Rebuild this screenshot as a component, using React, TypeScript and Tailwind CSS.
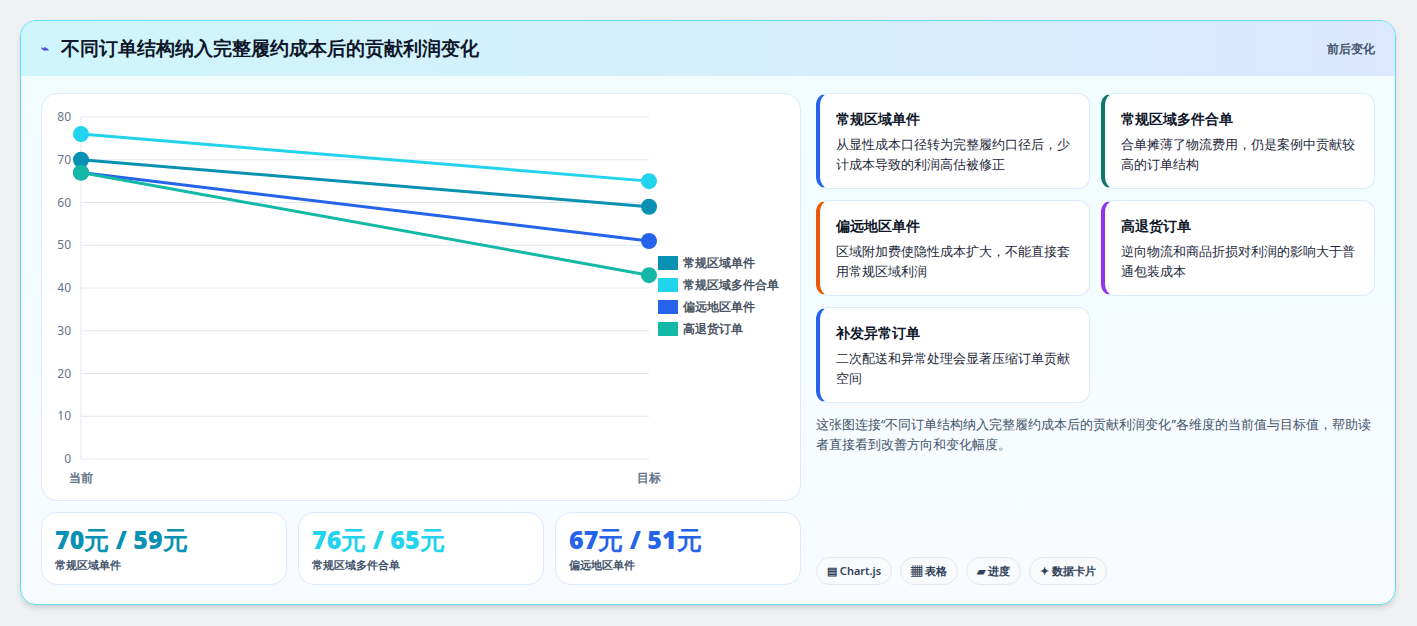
const series = [
  { name: "常规区域单件", color: "#0891b2", a: 70, b: 59 },
  { name: "常规区域多件合单", color: "#22d3ee", a: 76, b: 65 },
  { name: "偏远地区单件", color: "#2563eb", a: 67, b: 51 },
  { name: "高退货订单", color: "#14b8a6", a: 67, b: 43 },
];

const notes = [
  { title: "常规区域单件", text: "从显性成本口径转为完整履约口径后，少计成本导致的利润高估被修正", border: "border-l-[#2563eb]" },
  { title: "常规区域多件合单", text: "合单摊薄了物流费用，仍是案例中贡献较高的订单结构", border: "border-l-[#0f766e]" },
  { title: "偏远地区单件", text: "区域附加费使隐性成本扩大，不能直接套用常规区域利润", border: "border-l-[#ea580c]" },
  { title: "高退货订单", text: "逆向物流和商品折损对利润的影响大于普通包装成本", border: "border-l-[#9333ea]" },
  { title: "补发异常订单", text: "二次配送和异常处理会显著压缩订单贡献空间", border: "border-l-[#2563eb]" },
];

const stats = [
  { v: "70元 / 59元", l: "常规区域单件", c: "text-[#0891b2]" },
  { v: "76元 / 65元", l: "常规区域多件合单", c: "text-[#22d3ee]" },
  { v: "67元 / 51元", l: "偏远地区单件", c: "text-[#2563eb]" },
];

const x0 = 39;
const x1 = 607;
const y = (v: number) => 365 - v * 4.275;

function Chart() {
  return (
    <svg width="760" height="407" className="block">
      {[0, 10, 20, 30, 40, 50, 60, 70, 80].map((t) => (
        <g key={t}>
          <line x1={x0} x2={x1} y1={y(t)} y2={y(t)} stroke="#e2e8f0" />
          <text x={29} y={y(t) + 4} textAnchor="end" fontSize="12" fill="#64748b">{t}</text>
        </g>
      ))}
      <line x1={x0} x2={x0} y1={y(80)} y2={y(0)} stroke="#e2e8f0" />
      <text x={x0} y={388} textAnchor="middle" fontSize="12" fontWeight="600" fill="#64748b">当前</text>
      <text x={x1} y={388} textAnchor="middle" fontSize="12" fontWeight="600" fill="#64748b">目标</text>
      {series.map((s) => (
        <g key={s.name}>
          <line x1={x0} y1={y(s.a)} x2={x1} y2={y(s.b)} stroke={s.color} strokeWidth="3" />
          <circle cx={x0} cy={y(s.a)} r="8" fill={s.color} />
          <circle cx={x1} cy={y(s.b)} r="8" fill={s.color} />
        </g>
      ))}
      {series.map((s, i) => (
        <g key={s.name + "l"}>
          <rect x={616} y={162 + i * 22} width={20} height={14} fill={s.color} />
          <text x={641} y={173 + i * 22} fontSize="12" fontWeight="600" fill="#4b5563">{s.name}</text>
        </g>
      ))}
    </svg>
  );
}

export default function App() {
  return (
    <div className="min-h-[626px] bg-[#eef0f2] pt-5 pl-5 pr-[21px] font-['Noto_Sans_CJK_SC','Noto_Sans',sans-serif]">
      <div className="h-[585px] overflow-hidden rounded-2xl border border-[#5ee1f5] bg-gradient-to-b from-[#f0fdff] to-[#f8fbff] shadow-md">
        <div className="flex h-[55px] items-center justify-between bg-gradient-to-r from-[#cff6fc] to-[#dbe8fe] pl-5 pr-5">
          <div className="flex items-center gap-3">
            <span className="text-[13px] font-bold text-[#4f46e5]">⌁</span>
            <h1 className="text-[19px] font-black text-[#0f172a]">不同订单结构纳入完整履约成本后的贡献利润变化</h1>
          </div>
          <span className="text-xs font-semibold text-slate-600">前后变化</span>
        </div>
        <div className="flex gap-[15px] px-5 pt-[17px]">
          <div className="flex w-[760px] flex-col gap-[11px]">
            <div className="h-[408px] rounded-2xl border border-[#dbeafe] bg-white">
              <Chart />
            </div>
            <div className="grid grid-cols-3 gap-[11px]">
              {stats.map((s) => (
                <div key={s.l} className="h-[73px] rounded-2xl border border-[#dbeafe] bg-white px-[13px] pt-[8px]">
                  <div className={`text-[25px] font-black leading-[36px] ${s.c}`}>{s.v}</div>
                  <div className="text-[11px] font-semibold text-slate-600">{s.l}</div>
                </div>
              ))}
            </div>
          </div>
          <div className="flex w-[562px] flex-col">
            <div className="grid grid-cols-2 gap-x-[11px] gap-y-[11px]">
              {notes.map((n) => (
                <div key={n.title} className={`h-[96px] rounded-xl border border-[#dbeafe] border-l-4 ${n.border} bg-white px-4 pt-[14px]`}>
                  <div className="text-[14px] font-bold text-[#0f172a]">{n.title}</div>
                  <div className="mt-[6px] text-[12.5px] leading-[20px] text-[#1e293b]">{n.text}</div>
                </div>
              ))}
            </div>
            <p className="mt-[12px] text-[12.5px] leading-[20px] text-slate-600">这张图连接“不同订单结构纳入完整履约成本后的贡献利润变化”各维度的当前值与目标值，帮助读者直接看到改善方向和变化幅度。</p>
            <div className="mt-auto flex gap-2">
              {["▤ Chart.js", "▦ 表格", "▰ 进度", "✦ 数据卡片"].map((t) => (
                <span key={t} className="rounded-full border border-slate-200 bg-slate-50 px-[10px] py-[5px] text-[11px] font-semibold text-slate-700">{t}</span>
              ))}
            </div>
          </div>
        </div>
      </div>
    </div>
  );
}
